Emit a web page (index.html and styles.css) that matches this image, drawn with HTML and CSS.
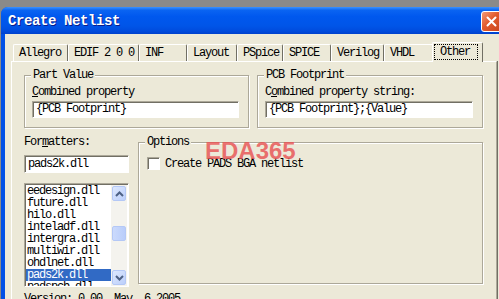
FILE: index.html
```html
<!DOCTYPE html>
<html lang="en">
<head>
    <meta charset="UTF-8">
    <title>Create Netlist</title>
    <link rel="stylesheet" href="styles.css">
</head>
<body>
    <div class="window">
        <!-- Title bar -->
        <div class="titlebar">
            <span class="title">Create Netlist</span>
            <span class="close-btn">
                <svg width="11" height="11" viewBox="0 0 11 11">
                    <path d="M1.5 1.5 L9.5 9.5 M9.5 1.5 L1.5 9.5" stroke="#fff" stroke-width="2" stroke-linecap="round"/>
                </svg>
            </span>
        </div>

        <div class="client">
            <!-- Tabs -->
            <div class="tabs">
                <div class="tab w55">Allegro</div>
                <div class="tab w71">EDIF 2 0 0</div>
                <div class="tab w48">INF</div>
                <div class="tab w50">Layout</div>
                <div class="tab w46">PSpice</div>
                <div class="tab w48">SPICE</div>
                <div class="tab w53">Verilog</div>
                <div class="tab w50">VHDL</div>
                <div class="tab active"><span class="focus">Other</span></div>
            </div>

            <!-- Tab page -->
            <div class="tab-page">
                <div class="top-row">
                    <fieldset class="group part-value">
                        <legend>Part Value</legend>
                        <div class="label"><u>C</u>ombined property</div>
                        <div class="field">{PCB Footprint}</div>
                    </fieldset>
                    <fieldset class="group pcb-footprint">
                        <legend>PCB Footprint</legend>
                        <div class="label">C<u>o</u>mbined property string:</div>
                        <div class="field">{PCB Footprint};{Value}</div>
                    </fieldset>
                </div>

                <div class="lower-row">
                    <div class="formatters">
                        <div class="label">For<u>m</u>atters:</div>
                        <div class="field small">pads2k.dll</div>
                        <div class="listbox">
                            <ul class="items">
                                <li>eedesign.dll</li>
                                <li>future.dll</li>
                                <li>hilo.dll</li>
                                <li>inteladf.dll</li>
                                <li>intergra.dll</li>
                                <li>multiwir.dll</li>
                                <li>ohdlnet.dll</li>
                                <li class="selected">pads2k.dll</li>
                                <li>padspcb.dll</li>
                            </ul>
                            <div class="scrollbar">
                                <div class="sb-btn">
                                    <svg width="9" height="6" viewBox="0 0 9 6"><path d="M1 5 L4.5 1.5 L8 5" fill="none" stroke="#4D6185" stroke-width="2"/></svg>
                                </div>
                                <div class="sb-track">
                                    <div class="sb-thumb"></div>
                                </div>
                                <div class="sb-btn">
                                    <svg width="9" height="6" viewBox="0 0 9 6"><path d="M1 1 L4.5 4.5 L8 1" fill="none" stroke="#4D6185" stroke-width="2"/></svg>
                                </div>
                            </div>
                        </div>
                    </div>

                    <fieldset class="group options">
                        <legend>Options</legend>
                        <div class="check">
                            <span class="checkbox"></span>
                            <span>Create PADS BGA netlist</span>
                        </div>
                    </fieldset>
                </div>

                <div class="version">Version: 0.00  May  6 2005</div>
            </div>
        </div>

        <!-- Watermark over the dialog -->
        <div class="watermark">EDA365</div>
    </div>
</body>
</html>
```

FILE: styles.css
```css
/* Page */
body {
    margin: 0;
    background-color: #8a8a8a;
    overflow: hidden;
    font-family: "Liberation Mono", "Noto Sans CJK SC", monospace;
    font-size: 12px;
    letter-spacing: -1.2px;
    color: #000000;
}

/* Window frame */
.window {
    position: relative;
    margin-top: 7px;
    margin-left: 1px;
    width: 510px;
    height: 320px;
    background-color: #0050e6;
    border-radius: 7px 7px 0 0;
}

.titlebar {
    display: flex;
    align-items: center;
    height: 27px;
    padding: 0 9px 0 7px;
    border-radius: 7px 7px 0 0;
    background: linear-gradient(to bottom, #3c92ff 0%, #0a64f2 12%, #0058ee 35%, #0055e8 70%, #004bdc 90%, #0041cc 100%);
}

.title {
    flex: 1;
    color: #ffffff;
    font-weight: bold;
    font-size: 14px;
    letter-spacing: -0.4px;
    text-shadow: 1px 1px 0 #0a1c8a;
}

.close-btn {
    display: flex;
    align-items: center;
    justify-content: center;
    width: 19px;
    height: 19px;
    margin-top: 2px;
    border: 1px solid #ffffff;
    border-radius: 3px;
    background: linear-gradient(to bottom right, #f29a78, #e25a2c 45%, #c8441c);
}

/* Client area */
.client {
    height: 293px;
    margin-left: 4px;
    padding-top: 8px;
    background-color: #ece9d8;
    box-sizing: border-box;
}

/* Tabs */
.tabs {
    display: flex;
    align-items: flex-end;
    margin-left: 8px;
    height: 19px;
}

.tab {
    position: relative;
    height: 17px;
    padding-left: 5px;
    line-height: 16px;
    border-top: 1px solid #ffffff;
    border-left: 1px solid #ffffff;
    border-right: 1px solid #716f64;
    border-radius: 2px 2px 0 0;
    box-sizing: border-box;
    white-space: pre;
}

.w46 { width: 46px; }
.w48 { width: 48px; }
.w50 { width: 50px; }
.w53 { width: 53px; }
.w55 { width: 55px; }
.w71 { width: 71px; }

.tab.active {
    z-index: 1;
    width: 51px;
    height: 20px;
    margin-left: -2px;
    margin-bottom: -1px;
    padding: 1px 0 0 1px;
    background-color: #ece9d8;
}

.focus {
    display: block;
    width: 44px;
    height: 16px;
    padding-left: 5px;
    line-height: 15px;
    border: 1px dotted #000000;
    box-sizing: border-box;
}

.tab-page {
    width: 486px;
    height: 250px;
    margin-left: 6px;
    padding: 7px 0 0 12px;
    border-top: 1px solid #ffffff;
    border-left: 1px solid #ffffff;
    border-right: 1px solid #aca899;
    box-shadow: 1px 0 0 #716f64;
    box-sizing: border-box;
}

/* Group boxes */
.group {
    margin: 0;
    padding: 5px 9px 9px 7px;
    border: 1px solid #aca899;
    box-shadow: inset 1px 1px 0 #ffffff, 1px 1px 0 #ffffff;
    min-width: 0;
}

.group legend {
    margin-left: -1px;
    padding: 0 2px;
    line-height: 12px;
    background-color: #ece9d8;
}

.top-row {
    display: flex;
    gap: 8px;
}

.part-value {
    width: 225px;
    box-sizing: border-box;
}

.pcb-footprint {
    width: 226px;
    box-sizing: border-box;
}

.label {
    height: 12px;
    line-height: 12px;
    margin-bottom: 3px;
}

/* Sunken edit fields */
.field {
    height: 17px;
    padding-left: 3px;
    line-height: 15px;
    background-color: #ffffff;
    border: 1px solid;
    border-color: #aca899 #ffffff #ffffff #aca899;
    box-shadow: inset 1px 1px 0 #716f64;
    box-sizing: border-box;
    white-space: pre;
}

.lower-row {
    display: flex;
    gap: 9px;
    margin-top: 8px;
}

.formatters {
    width: 105px;
}

.formatters .label {
    margin-bottom: 7px;
}

.field.small {
    height: 18px;
    line-height: 16px;
}

/* List box */
.listbox {
    display: flex;
    height: 104px;
    margin-top: 10px;
    background-color: #ffffff;
    border: 1px solid;
    border-color: #aca899 #ffffff #ffffff #aca899;
    box-shadow: inset 1px 1px 0 #716f64;
    padding: 1px 1px 0 1px;
    box-sizing: border-box;
    overflow: hidden;
}

.items {
    flex: 1;
    margin: 0;
    padding: 0;
    list-style: none;
}

.items li {
    height: 12px;
    line-height: 12px;
    padding-left: 1px;
}

.items li.selected {
    background-color: #316ac5;
    color: #ffffff;
}

.scrollbar {
    display: flex;
    flex-direction: column;
    width: 16px;
    background-color: #f4f3ee;
}

.sb-btn {
    display: flex;
    align-items: center;
    justify-content: center;
    height: 15px;
    margin: 1px;
    border: 1px solid #b4c8f6;
    border-radius: 2px;
    background: linear-gradient(to bottom right, #dde8fe, #bccffa);
    box-sizing: border-box;
}

.sb-track {
    flex: 1;
    padding-top: 24px;
}

.sb-thumb {
    height: 13px;
    margin: 0 1px;
    border: 1px solid #b4c8f6;
    border-radius: 2px;
    background: linear-gradient(to right, #cbdafc, #b9cdfa);
}

/* Options */
.options {
    width: 345px;
    height: 148px;
    padding: 9px 9px 9px 8px;
    box-sizing: border-box;
}

.options legend {
    margin-left: -2px;
}

.check {
    display: flex;
    align-items: center;
    gap: 5px;
    height: 13px;
}

.checkbox {
    width: 13px;
    height: 13px;
    background-color: #ffffff;
    border: 1px solid;
    border-color: #aca899 #ffffff #ffffff #aca899;
    box-shadow: inset 1px 1px 0 #716f64;
    box-sizing: border-box;
}

.version {
    margin-top: 6px;
    line-height: 12px;
    white-space: pre;
}

/* Watermark */
.watermark {
    position: absolute;
    left: 204px;
    top: 130px;
    font-family: "Liberation Sans", Arial, sans-serif;
    font-weight: bold;
    font-size: 24px;
    letter-spacing: 0;
    color: rgba(232, 84, 84, 0.82);
}
```
